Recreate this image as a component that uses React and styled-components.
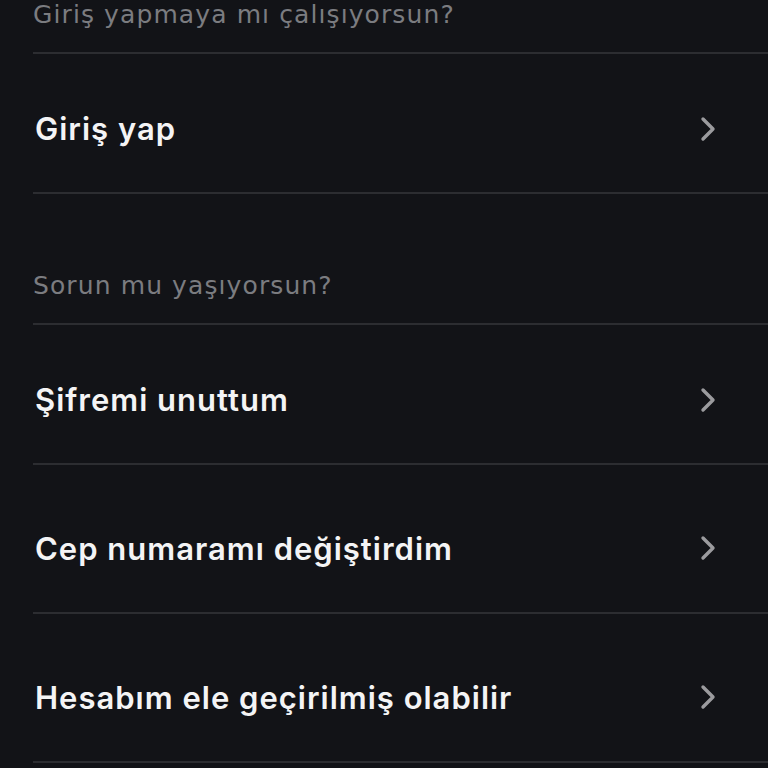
import React from 'react';
import styled, { createGlobalStyle } from 'styled-components';

const GlobalStyle = createGlobalStyle`
    html, body {
        margin: 0;
        padding: 0;
        background: #121317;
    }
    body {
        font-family: Inter, "Noto Sans", sans-serif;
        -webkit-font-smoothing: antialiased;
    }
`

const Page = styled.div`
    width: 768px;
    height: 768px;
    overflow: hidden;
    background: #121317;
    display: flex;
    flex-direction: column;
    padding-left: 33px;
    box-sizing: border-box;
`

const Section = styled.section`
    display: flex;
    flex-direction: column;
    margin-top: ${(p) => p.$top}px;
`

const SectionTitle = styled.div`
    font-family: "DejaVu Sans", Inter, sans-serif;
    font-size: 25px;
    font-weight: 400;
    line-height: 30px;
    letter-spacing: 1.1px;
    color: #7b7c80;
    padding-bottom: 22px;
    border-bottom: 2px solid #2c2d31;
`

const Row = styled.div`
    height: ${(p) => p.$h}px;
    box-sizing: border-box;
    padding-top: ${(p) => p.$offset}px;
    padding-left: 2px;
    padding-right: 51px;
    display: flex;
    align-items: center;
    justify-content: space-between;
    border-bottom: 2px solid #2c2d31;
    cursor: pointer;
`

const RowLabel = styled.span`
    font-size: 31px;
    font-weight: 600;
    color: #f4f4f5;
    letter-spacing: 1px;
`

const Chevron = () => (
    <svg width="18" height="26" viewBox="0 0 18 26">
        <path d="M4 3 L14 13 L4 23" fill="none" stroke="#9b9b9e" strokeWidth="3.4" strokeLinecap="round" strokeLinejoin="round" />
    </svg>
)

const sections = [
    {
        title: 'Giriş yapmaya mı çalışıyorsun?',
        top: 0,
        rows: [{ label: 'Giriş yap', h: 140, offset: 11 }],
    },
    {
        title: 'Sorun mu yaşıyorsun?',
        top: 77,
        rows: [
            { label: 'Şifremi unuttum', h: 140, offset: 11 },
            { label: 'Cep numaramı değiştirdim', h: 149, offset: 19 },
            { label: 'Hesabım ele geçirilmiş olabilir', h: 149, offset: 19 },
        ],
    },
]

function App() {
  return (
    <>
      <GlobalStyle />
      <Page>
        {sections.map((s) => (
          <Section key={s.title} $top={s.top}>
            <SectionTitle>{s.title}</SectionTitle>
            {s.rows.map((r) => (
              <Row key={r.label} $h={r.h} $offset={r.offset}>
                <RowLabel>{r.label}</RowLabel>
                <Chevron />
              </Row>
            ))}
          </Section>
        ))}
      </Page>
    </>
  );
}

export default App;
